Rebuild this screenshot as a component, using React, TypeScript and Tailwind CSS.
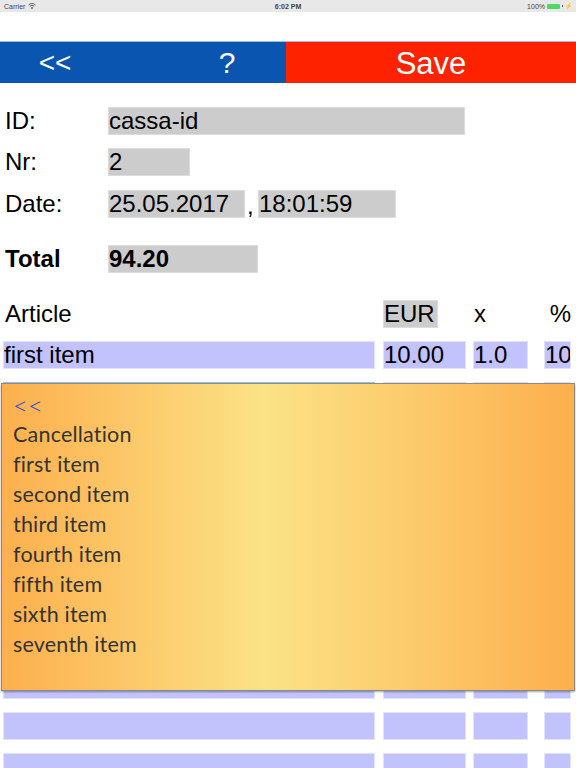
import React from "react";

const ROWS = [
  { a: "first item", e: "10.00", x: "1.0", p: "10" },
  { a: "", e: "", x: "", p: "", focus: true },
  ...Array.from({ length: 9 }, () => ({ a: "", e: "", x: "", p: "" })),
];

const MENU = [
  "Cancellation",
  "first item",
  "second item",
  "third item",
  "fourth item",
  "fifth item",
  "sixth item",
  "seventh item",
];

function Bar({ w, children, focus }: { w: string; children?: React.ReactNode; focus?: boolean }) {
  if (focus) {
    return (
      <div className={`${w} h-[28px] shrink-0 bg-white border border-[#9cc3ea] flex`}>
        <div className="w-[39px] h-full bg-[#a9cdf5]" />
      </div>
    );
  }
  return (
    <div
      className={`${w} h-[28px] shrink-0 bg-[#c2c2fd] border border-[#e2e2fb] flex items-center text-[24px] leading-none text-black overflow-hidden whitespace-nowrap`}
    >
      {children}
    </div>
  );
}

function Field({ w, children, bold }: { w: string; children?: React.ReactNode; bold?: boolean }) {
  return (
    <div
      className={`${w} h-[28px] bg-[#cccccc] border border-[#dcdcdc] flex items-center text-[24px] leading-none text-black ${bold ? "font-bold" : ""}`}
    >
      {children}
    </div>
  );
}

export default function App() {
  return (
    <div
      className="relative w-[576px] h-[768px] overflow-hidden bg-white"
      style={{ fontFamily: '"Liberation Sans", Arial, sans-serif' }}
    >
      {/* status bar */}
      <div className="h-[12px] bg-[#e8e8e8] flex items-center px-[4px] text-[7px] text-[#444] leading-none relative">
        <div className="flex items-center gap-[3px]">
          <span>Carrier</span>
          <svg width="8" height="6" viewBox="0 0 8 6">
            <path d="M0.5 2 A5 5 0 0 1 7.5 2" stroke="#555" strokeWidth="0.9" fill="none" />
            <path d="M1.8 3.3 A3.2 3.2 0 0 1 6.2 3.3" stroke="#555" strokeWidth="0.9" fill="none" />
            <circle cx="4" cy="5" r="0.9" fill="#555" />
          </svg>
        </div>
        <div className="absolute left-0 right-0 text-center font-semibold">6:02 PM</div>
        <div className="ml-auto flex items-center gap-[2px]">
          <span>100%</span>
          <div className="w-[13px] h-[5px] bg-[#4cd964] rounded-[1px]" />
          <div className="w-[1px] h-[2px] bg-[#555]" />
          <span className="text-[6px]">⚡</span>
        </div>
      </div>

      <div className="h-[29px]" />

      {/* toolbar */}
      <div className="h-[42px] flex border-t border-[#9fbce0]">
        <div className="w-[286px] bg-[#0a55b0] flex text-white">
          <div className="w-[110px] flex items-center justify-center text-[28px] leading-none">&lt;&lt;</div>
          <div className="w-[58px]" />
          <div className="w-[118px] flex items-center justify-center text-[30px] leading-none">?</div>
        </div>
        <div className="flex-1 bg-[#ff2200] flex items-center justify-center text-white text-[31px] leading-none pt-[1px]">
          Save
        </div>
      </div>

      {/* form */}
      <div className="pt-[24px]">
        <div className="flex items-center h-[28px]">
          <div className="w-[108px] pl-[5px] text-[24px] leading-none">ID:</div>
          <Field w="w-[357px]">cassa-id</Field>
        </div>
        <div className="flex items-center h-[28px] mt-[13px]">
          <div className="w-[108px] pl-[5px] text-[24px] leading-none">Nr:</div>
          <Field w="w-[82px]">2</Field>
        </div>
        <div className="flex items-center h-[28px] mt-[14px]">
          <div className="w-[108px] pl-[5px] text-[24px] leading-none">Date:</div>
          <Field w="w-[137px]">25.05.2017</Field>
          <div className="w-[13px] text-[24px] leading-none pl-[2px] pt-[4px]">,</div>
          <Field w="w-[138px]">18:01:59</Field>
        </div>
        <div className="flex items-center h-[28px] mt-[27px]">
          <div className="w-[108px] pl-[5px] text-[24px] leading-none font-bold">Total</div>
          <Field w="w-[150px]" bold>
            94.20
          </Field>
        </div>

        {/* table header */}
        <div className="flex items-center h-[28px] mt-[27px] pl-[3px] text-[24px] leading-none">
          <div className="w-[372px] pl-[2px]">Article</div>
          <div className="w-[83px] ml-[8px]">
            <div className="w-[55px] h-[28px] bg-[#cccccc] border border-[#dcdcdc] flex items-center">EUR</div>
          </div>
          <div className="w-[55px] ml-[7px] pl-[1px]">x</div>
          <div className="w-[27px] ml-[16px] text-right">%</div>
        </div>

        {/* rows */}
        <div className="flex flex-col mt-[13px]">
          {ROWS.map((r, i) => (
            <div key={i} className={`flex pl-[3px] ${i > 0 ? "mt-[13.2px]" : ""}`}>
              <Bar w="w-[372px]" focus={r.focus}>
                {r.a}
              </Bar>
              <div className="ml-[8px]">
                <Bar w="w-[83px]">{r.e}</Bar>
              </div>
              <div className="ml-[7px]">
                <Bar w="w-[55px]">{r.x}</Bar>
              </div>
              <div className="ml-[16px]">
                <Bar w="w-[27px]">{r.p}</Bar>
              </div>
            </div>
          ))}
        </div>
      </div>

      {/* popup menu */}
      <div
        className="absolute left-[1px] top-[383px] w-[574px] h-[308px] border border-[#8a8a8a] shadow-[0_1px_2px_rgba(0,0,0,0.35)] bg-[linear-gradient(to_right,#fdaf4d_0%,#fbe386_46%,#fdaf4d_100%)] pt-[6px] pl-[11px]"
        style={{ fontFamily: 'Lato, "Noto Sans", sans-serif' }}
      >
        <div className="h-[30px] flex items-center text-[26px] font-light text-[#2f4fd4] leading-none tracking-[0px]">&lt;&lt;</div>
        {MENU.map((m) => (
          <div key={m} className="h-[30px] flex items-center text-[21.5px] text-[#333333] leading-none tracking-[0.2px]">
            {m}
          </div>
        ))}
      </div>
    </div>
  );
}
